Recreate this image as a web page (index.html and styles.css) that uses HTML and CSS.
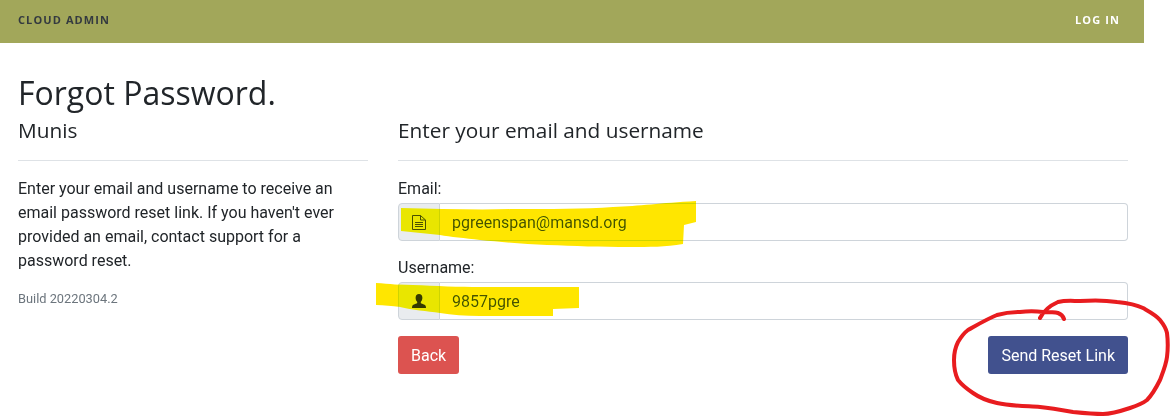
FILE: index.html
```html
<!DOCTYPE html>
<html>
<head>
    <meta charset="utf-8">
    <title>Forgot Password</title>
    <link rel="stylesheet" href="styles.css">
</head>
<body>
    <div class="page">
        <nav class="navbar">
            <a class="navbar__brand" href="#">Cloud Admin</a>
            <a class="navbar__link" href="#">Log in</a>
        </nav>

        <div class="content">
            <h1 class="title">Forgot Password.</h1>
            <div class="columns">
                <div class="about">
                    <h4 class="section-head">Munis</h4>
                    <hr class="rule">
                    <p class="about__text">Enter your email and username to receive an email password reset link. If you haven't ever provided an email, contact support for a password reset.</p>
                    <p class="about__build">Build 20220304.2</p>
                </div>
                <form class="reset">
                    <h4 class="section-head">Enter your email and username</h4>
                    <hr class="rule">
                    <div class="field">
                        <label class="field__label" for="email">Email:</label>
                        <div class="input-group">
                            <span class="input-group__icon">
                                <svg width="14" height="15" viewBox="0 0 14 15" fill="none" stroke="#495057" stroke-width="1">
                                    <path d="M.5 .5h8l5 4.500v9.500h-13z"/>
                                    <path d="M8.500 .5v4.500h5"/>
                                    <path d="M3 7.500h8M3 9.500h8M3 11.500h8"/>
                                </svg>
                            </span>
                            <input class="input-group__input" id="email" type="text" value="pgreenspan@mansd.org">
                        </div>
                    </div>
                    <div class="field">
                        <label class="field__label" for="username">Username:</label>
                        <div class="input-group">
                            <span class="input-group__icon">
                                <svg width="14" height="14" viewBox="0 0 14 14" fill="#343a40">
                                    <path d="M7 0c2.200 0 3.400 1.600 3.400 3.800 0 1.700-.7 3.300-1.600 4.100v1.200c0 .6 4.200 1.200 4.900 2.900.2.6.3 1.200.3 2H0c0-.8.1-1.400.3-2 .7-1.700 4.900-2.300 4.900-2.900V7.900C4.300 7.100 3.600 5.500 3.600 3.800 3.600 1.600 4.800 0 7 0z"/>
                                </svg>
                            </span>
                            <input class="input-group__input" id="username" type="text" value="9857pgre">
                        </div>
                    </div>
                    <div class="actions">
                        <button class="btn btn--danger" type="button">Back</button>
                        <button class="btn btn--primary" type="button">Send Reset Link</button>
                    </div>
                </form>
            </div>
        </div>
    </div>

    <!-- marker scribbles drawn over the screenshot -->
    <svg class="scribble" width="1170" height="418" viewBox="0 0 1170 418">
        <g class="scribble__marker">
            <path d="M401 208C440 209 480 210 513 209 550 209 585 209 613 207 640 206 660 203 696 201L696 222 684 225 683 244C665 247 650 247 630 247 600 247 575 246 547 245 525 244 500 242 480 240 465 238 450 237 440 235L401 231z"/>
            <path d="M376 283C390 284 400 285 413 285 435 286 460 287 480 287L579 287 579 308 553 309 553 316 480 316C465 316 452 315 440 313 427 311 412 310 400 307 392 306 384 305 376 305z"/>
        </g>
        <path class="scribble__pen" d="M1040 318C1043 312 1049 306 1058 302 1066 300 1073 301 1080 301 1093 300 1105 300 1117 302 1127 303 1135 304 1143 308 1150 312 1156 315 1160 320 1164 325 1166 328 1167 333 1168 341 1168 349 1167 357 1166 365 1163 372 1160 380 1156 388 1152 395 1147 400 1142 404 1136 406 1130 408 1121 411 1112 414 1103 414 1093 414 1083 413 1073 412 1062 410 1051 408 1040 407 1026 406 1011 406 997 403 988 401 980 398 973 393 967 389 962 385 958 380 955 374 954 367 954 360 954 354 955 348 958 342 961 337 964 333 968 330 977 325 987 319 997 315 1004 313 1012 312 1020 312 1028 311 1035 311 1043 312 1049 312 1054 312 1058 313 1061 314 1063 316 1064 319"/>
    </svg>
</body>
</html>
```
FILE: styles.css
```css
* {
    box-sizing: border-box;
}
html,
body {
    margin: 0;
    padding: 0;
}
body {
    background: #fff;
    color: #212529;
    font-family: Roboto, sans-serif;
    font-size: 16px;
    height: 418px;
    overflow: hidden;
    position: relative;
    width: 1170px;
}
.page {
    width: 1144px;
}

.navbar {
    align-items: center;
    background: #a2a75a;
    display: flex;
    font-family: "Open Sans", sans-serif;
    font-size: 11px;
    font-weight: 700;
    height: 43px;
    justify-content: space-between;
    letter-spacing: 1.1px;
    padding: 0 24px 5px 18px;
    text-transform: uppercase;
}
.navbar a {
    text-decoration: none;
}
.navbar__brand {
    color: #343a40;
}
.navbar__link {
    color: #fff;
}

.content {
    padding: 28px 16px 0 18px;
}
.title {
    font-family: "Open Sans", sans-serif;
    font-size: 32px;
    font-weight: 400;
    line-height: 44px;
    margin: 0;
}

.columns {
    column-gap: 30px;
    display: grid;
    grid-template-columns: 350px 730px;
}
.section-head {
    font-family: "Open Sans", sans-serif;
    font-size: 20.8px;
    font-weight: 400;
    line-height: 29px;
    margin: 0;
    padding-top: 1px;
}
.rule {
    border: 0;
    border-top: 1px solid #dee2e6;
    margin: 15px 0 16px;
}

.about__text {
    line-height: 24px;
    margin: 0 0 18px;
}
.about__build {
    color: #6c757d;
    font-size: 12.8px;
    margin: 0;
}

.field {
    margin-bottom: 15px;
}
.field__label {
    display: block;
    line-height: 24px;
    margin-bottom: 2px;
}
.input-group {
    display: flex;
    height: 38px;
}
.input-group__icon {
    align-items: center;
    background: #e9ecef;
    border: 1px solid #ced4da;
    border-radius: 4px 0 0 4px;
    display: flex;
    justify-content: center;
    width: 42px;
}
.input-group__input {
    border: 1px solid #ced4da;
    border-left: 0;
    border-radius: 0 4px 4px 0;
    color: #495057;
    flex: 1;
    font-family: Roboto, sans-serif;
    font-size: 16px;
    outline: 0;
    padding: 0 12px;
}

.actions {
    display: flex;
    justify-content: space-between;
    margin-top: 16px;
}
.btn {
    border: 0;
    border-radius: 3px;
    color: #fff;
    font-family: Roboto, sans-serif;
    font-size: 16px;
    height: 38px;
    padding: 0 13px;
}
.btn--danger {
    background: #dc5350;
}
.btn--primary {
    background: #41518e;
}

.scribble {
    left: 0;
    pointer-events: none;
    position: absolute;
    top: 0;
}
.scribble__marker {
    fill: #ffe600;
    mix-blend-mode: darken;
}
.scribble__pen {
    fill: none;
    stroke: #e81c1f;
    stroke-linecap: round;
    stroke-width: 4;
}
```
